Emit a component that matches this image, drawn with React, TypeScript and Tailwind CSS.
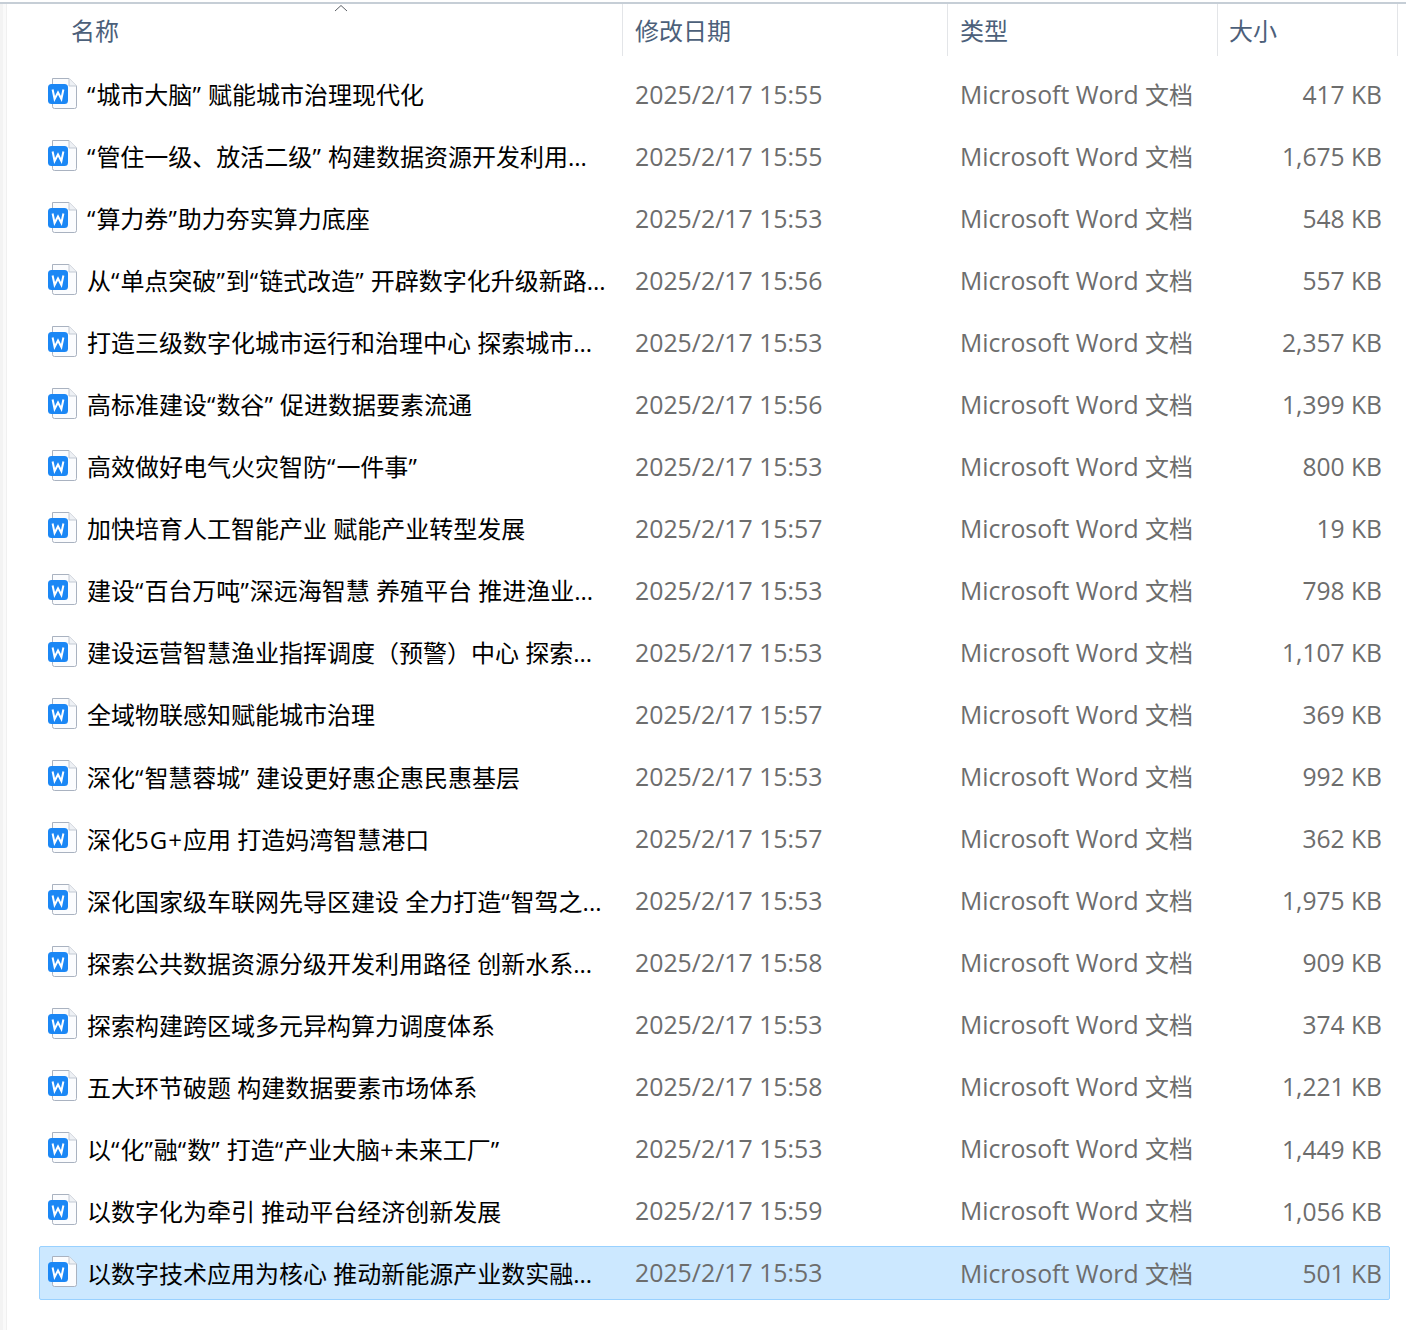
const files: [string, string, string][] = [
  ["“城市大脑” 赋能城市治理现代化", "15:55", "417 KB"],
  ["“管住一级、放活二级” 构建数据资源开发利用...", "15:55", "1,675 KB"],
  ["“算力券”助力夯实算力底座", "15:53", "548 KB"],
  ["从“单点突破”到“链式改造” 开辟数字化升级新路...", "15:56", "557 KB"],
  ["打造三级数字化城市运行和治理中心 探索城市...", "15:53", "2,357 KB"],
  ["高标准建设“数谷” 促进数据要素流通", "15:56", "1,399 KB"],
  ["高效做好电气火灾智防“一件事”", "15:53", "800 KB"],
  ["加快培育人工智能产业 赋能产业转型发展", "15:57", "19 KB"],
  ["建设“百台万吨”深远海智慧 养殖平台 推进渔业...", "15:53", "798 KB"],
  ["建设运营智慧渔业指挥调度（预警）中心 探索...", "15:53", "1,107 KB"],
  ["全域物联感知赋能城市治理", "15:57", "369 KB"],
  ["深化“智慧蓉城” 建设更好惠企惠民惠基层", "15:53", "992 KB"],
  ["深化5G+应用 打造妈湾智慧港口", "15:57", "362 KB"],
  ["深化国家级车联网先导区建设 全力打造“智驾之...", "15:53", "1,975 KB"],
  ["探索公共数据资源分级开发利用路径 创新水系...", "15:58", "909 KB"],
  ["探索构建跨区域多元异构算力调度体系", "15:53", "374 KB"],
  ["五大环节破题 构建数据要素市场体系", "15:58", "1,221 KB"],
  ["以“化”融“数” 打造“产业大脑+未来工厂”", "15:53", "1,449 KB"],
  ["以数字化为牵引 推动平台经济创新发展", "15:59", "1,056 KB"],
  ["以数字技术应用为核心 推动新能源产业数实融...", "15:53", "501 KB"],
];

function Name({ text }: { text: string }) {
  const parts = text.split(/([“”+]|5G)/);
  return (
    <>
      {parts.map((p, i) =>
        i % 2 === 1 ? (
          <span key={i} className="tracking-[1px]">{p}</span>
        ) : (
          p
        ),
      )}
    </>
  );
}

function DocIcon() {
  return (
    <svg width="29" height="32" viewBox="0 0 29 32" className="shrink-0 -mt-[3px]">
      <path d="M4.5 0.5H21L28.5 8V28.5a2 2 0 0 1-2 2H6.5a2 2 0 0 1-2-2Z" fill="#fbfcfe" stroke="#a9b2c0" strokeWidth="1" />
      <path d="M21 0.5V8H28.5" fill="#eef1f5" stroke="#c3c9d3" strokeWidth="1" />
      <rect x="0" y="6" width="20" height="20" rx="3.5" fill="#1b87f5" />
      <path d="M4.6 11.5L6.6 21L10 14.5L13.4 21L15.4 11.5" fill="none" stroke="#fff" strokeWidth="2" strokeLinejoin="miter" />
    </svg>
  );
}

function Head({ w, label, pl = "pl-[12px]" }: { w: string; label: string; pl?: string }) {
  return (
    <div className={`${w} h-[52px] flex items-center ${pl} pt-[1px] text-[24px] text-[#4c607a] border-r border-[#e3e5e8]`}>
      {label}
    </div>
  );
}

export default function App() {
  return (
    <div
      className="relative w-[1406px] h-[1330px] bg-white overflow-hidden"
      style={{ fontFamily: '"Open Sans", "Noto Sans CJK SC", sans-serif' }}
    >
      <div className="h-[4px] bg-white border-t-[2px] border-b-[2px] border-t-white border-b-[#c6ced6]" />
      <div className="flex">
        <div className="w-[7px] shrink-0 h-[1326px] border-l-[3px] border-r-[1px] border-l-[#f3f3f3] border-r-[#f0f0f0] bg-[#fafafa]" />
        <div className="flex-1 min-w-0">
          <div className="relative flex h-[52px] pl-[52px]">
            <Head w="w-[564px]" label="名称" />
            <svg width="14" height="8" viewBox="0 0 14 8" className="absolute left-[327px] top-[0px]">
              <path d="M1 7L7 1.5L13 7" fill="none" stroke="#5c6066" strokeWidth="1" />
            </svg>
            <Head w="w-[325px]" label="修改日期" />
            <Head w="w-[270px]" label="类型" />
            <Head w="w-[180px]" label="大小" pl="pl-[11px]" />
          </div>
          <div className="pt-[7px] pl-[32px] pr-[16px]">
            {files.map(([name, time, size], i) => {
              const selected = i === files.length - 1;
              return (
                <div key={i} className="h-[62.05px] flex items-center">
                  <div
                    className={`h-[54px] w-full flex items-center pt-[2px] rounded-[2px] border ${
                      selected ? "bg-[#cce8ff] border-[#99d1ff]" : "border-transparent"
                    }`}
                  >
                    <div className="w-[595px] shrink-0 pl-[8px] flex items-center">
                      <DocIcon />
                      <span className="ml-[10px] text-[24px] leading-none text-[#000] whitespace-nowrap"><Name text={name} /></span>
                    </div>
                    <div className="w-[325px] shrink-0 -mt-[2px] text-[24.85px] leading-none text-[#6d6d6d] whitespace-nowrap">2025/2/17 {time}</div>
                    <div className="w-[300px] shrink-0 text-[24.75px] leading-none text-[#6d6d6d] whitespace-nowrap">Microsoft Word <span className="text-[24px]">文档</span></div>
                    <div className="flex-1 min-w-0 pr-[7px] text-right text-[24.6px] leading-none text-[#6d6d6d] whitespace-nowrap">{size}</div>
                  </div>
                </div>
              );
            })}
          </div>
        </div>
      </div>
    </div>
  );
}
